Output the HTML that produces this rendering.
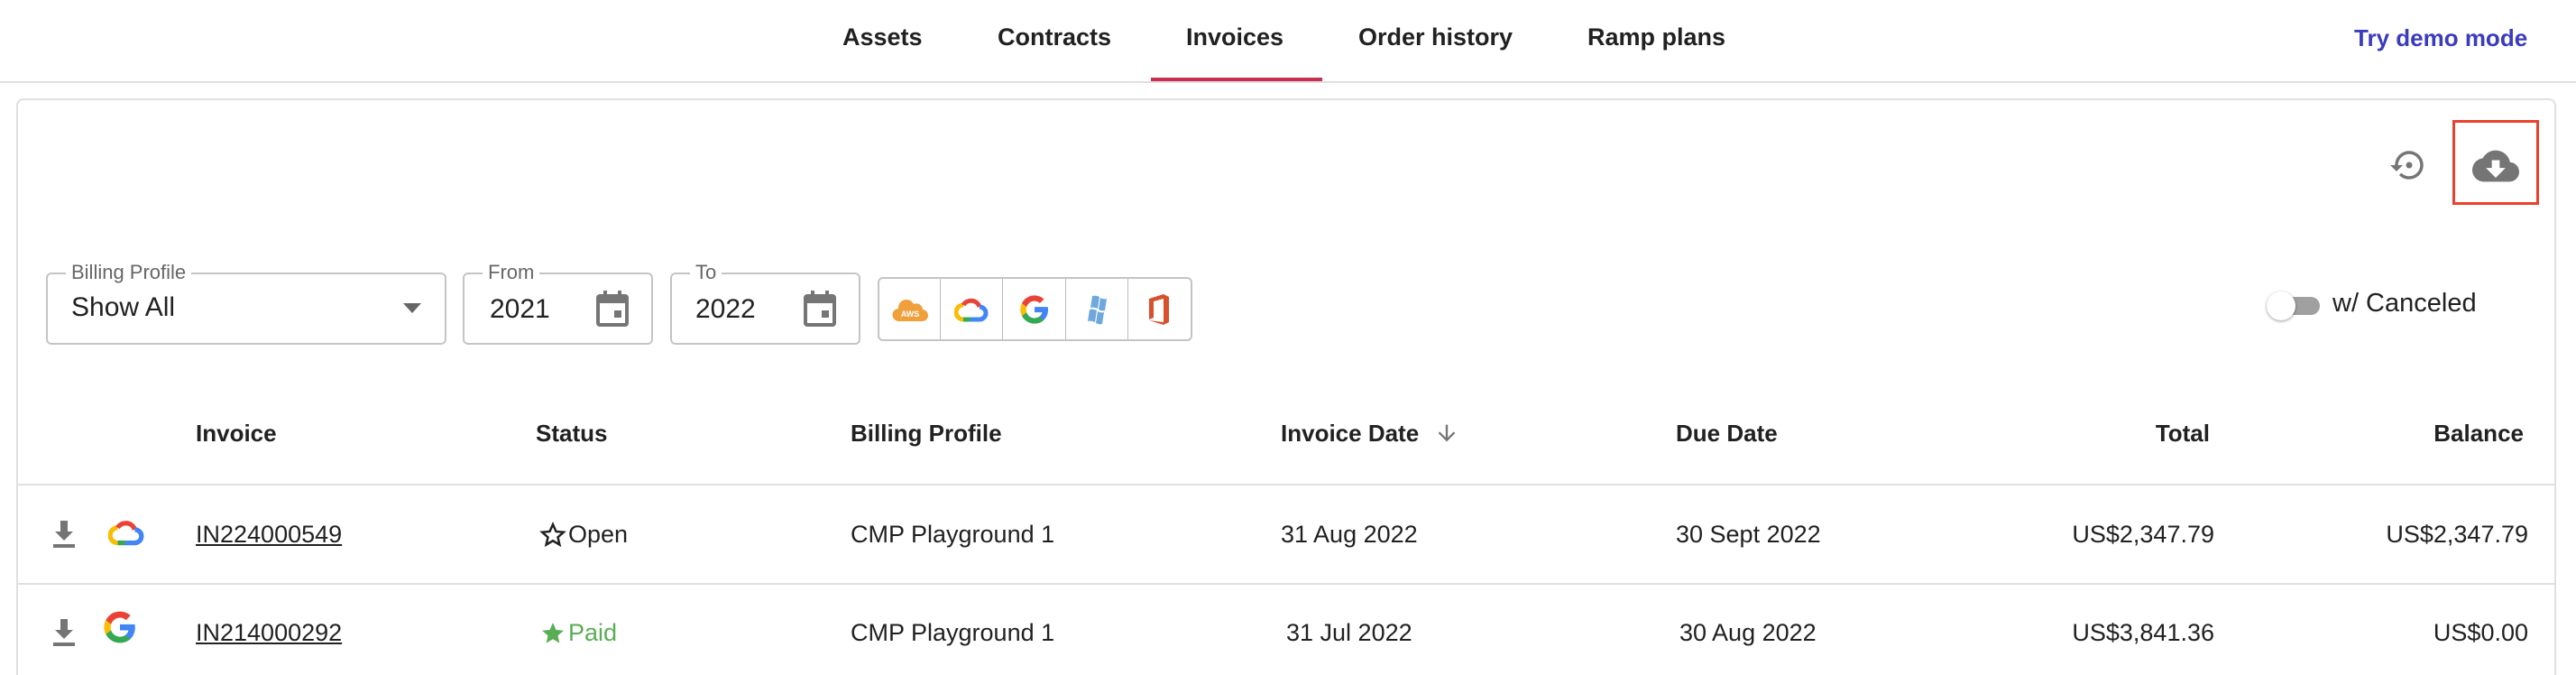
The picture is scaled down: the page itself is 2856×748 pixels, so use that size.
<!DOCTYPE html>
<html style="overflow:hidden;height:748px"><head><meta charset="utf-8"><style>
*{margin:0;padding:0;box-sizing:border-box}
body{width:2856px;height:748px;overflow:hidden;background:#fff;font-family:"Liberation Sans",Arial,sans-serif;color:#212121;position:relative}
#w{position:absolute;left:0;top:0;width:2856px;height:748px;overflow:hidden}
.a{position:absolute;white-space:nowrap}
.nav{font-size:27px;font-weight:bold;top:26px;color:#212121}
.hd{font-size:26px;font-weight:bold;top:465px}
.c{font-size:27px}
.r1{top:577px}.r2{top:686px}
.fld{position:absolute;border:2px solid #c4c4c4;border-radius:6px;height:80px;top:302px}
.lbl{position:absolute;top:-15px;left:20px;background:#fff;padding:0 6px;font-size:22px;color:#666}
.val{position:absolute;left:26px;top:20px;font-size:30px;color:#212121}
.rt{text-align:right}
</style></head><body><div id="w">
<div class="a nav" style="left:934px">Assets</div>
<div class="a nav" style="left:1106px">Contracts</div>
<div class="a nav" style="left:1315px">Invoices</div>
<div class="a nav" style="left:1506px">Order history</div>
<div class="a nav" style="left:1760px">Ramp plans</div>
<div class="a nav" style="left:2610px;color:#3b3bbd;font-size:26px;top:27px">Try demo mode</div>
<div class="a" style="left:1276px;top:86px;width:190px;height:4px;background:#c8304f"></div>
<div class="a" style="left:0;top:90px;width:2856px;height:2px;background:#e0e0e0"></div>

<div class="a" style="left:18px;top:109px;width:2816px;height:639px;border:2px solid #e0e0e0;border-bottom:none;border-radius:8px 8px 0 0"></div>

<svg class="a" style="left:2650px;top:162px" width="42" height="42" viewBox="0 0 24 24"><path fill="#757575" d="M13 3a9 9 0 0 0-9 9H1l3.89 3.89.07.14L9 12H6c0-3.87 3.13-7 7-7s7 3.13 7 7-3.13 7-7 7c-1.93 0-3.68-.79-4.94-2.06l-1.420 1.42A8.95 8.95 0 0 0 13 21a9 9 0 0 0 0-18zm0 7a2 2 0 1 0 0 4 2 2 0 0 0 0-4z" transform="translate(-1 0)"/></svg>
<div class="a" style="left:2719px;top:133px;width:96px;height:94px;border:3px solid #e8412c"></div>
<svg class="a" style="left:2741px;top:158px" width="52" height="52" viewBox="0 0 24 24"><path fill="#757575" d="M19.35 10.04A7.49 7.49 0 0 0 12 4C9.11 4 6.6 5.64 5.35 8.04A5.994 5.994 0 0 0 0 14c0 3.31 2.69 6 6 6h13c2.76 0 5-2.24 5-5 0-2.64-2.05-4.78-4.65-4.96zM17 13l-5 5-5-5h3V9h4v4h3z"/></svg>

<div class="fld" style="left:51px;width:444px"><span class="lbl">Billing Profile</span><span class="val">Show All</span>
<svg style="position:absolute;right:26px;top:32px" width="20" height="12"><path d="M0 0h20L10 11z" fill="#666"/></svg></div>
<div class="fld" style="left:513px;width:211px"><span class="lbl">From</span><span class="val" style="left:28px;top:22px">2021</span>
<svg style="position:absolute;left:144px;top:16px" width="40" height="44" viewBox="0 0 20 22"><path fill="#757575" d="M3 3h2V1h2v2h6V1h2v2h2a2 2 0 0 1 2 2v14a2 2 0 0 1-2 2H3a2 2 0 0 1-2-2V5a2 2 0 0 1 2-2zm0 5v11h14V8zm8 4h4v4h-4z"/></svg></div>
<div class="fld" style="left:743px;width:211px"><span class="lbl">To</span><span class="val" style="left:26px;top:22px">2022</span>
<svg style="position:absolute;left:144px;top:16px" width="40" height="44" viewBox="0 0 20 22"><path fill="#757575" d="M3 3h2V1h2v2h6V1h2v2h2a2 2 0 0 1 2 2v14a2 2 0 0 1-2 2H3a2 2 0 0 1-2-2V5a2 2 0 0 1 2-2zm0 5v11h14V8zm8 4h4v4h-4z"/></svg></div>

<div class="a" style="left:973px;top:307px;width:349px;height:71px;border:2px solid #c4c4c4;border-radius:6px;display:flex">
<div style="width:69px;border-right:1px solid #bbb;display:flex;align-items:center;justify-content:center"><svg width="40" height="30" viewBox="0 0 40 30"><path fill="#f0a03a" d="M8 28a7 7 0 0 1-1-14 9 9 0 0 1 17-5 7 7 0 0 1 10 6 6.5 6.5 0 0 1-1 13z"/><text x="20" y="23" font-size="9" fill="#fff" font-family="Liberation Sans" text-anchor="middle" font-weight="bold">AWS</text></svg></div>
<div style="width:70px;border-right:1px solid #bbb;display:flex;align-items:center;justify-content:center"><svg width="38" height="30" viewBox="0 0 38 30"><path d="M10 26a8 8 0 0 1 0-16" stroke="#fbbc04" stroke-width="5" fill="none"/><path d="M10 10a10 10 0 0 1 18 2" stroke="#ea4335" stroke-width="5" fill="none"/><path d="M28 12a7 7 0 0 1 0 14H18" stroke="#4285f4" stroke-width="5" fill="none"/><path d="M18 26h-8" stroke="#34a853" stroke-width="5"/></svg></div>
<div style="width:70px;border-right:1px solid #bbb;display:flex;align-items:center;justify-content:center"><svg width="34" height="34" viewBox="0 0 24 24"><path fill="#4285f4" d="M22.6 12.2c0-.8-.1-1.5-.2-2.2H12v4.2h5.9a5 5 0 0 1-2.2 3.3v2.7h3.6c2.1-1.9 3.3-4.8 3.3-8z"/><path fill="#34a853" d="M12 23c3 0 5.5-1 7.3-2.7l-3.6-2.7c-1 .7-2.2 1.1-3.7 1.1-2.9 0-5.3-1.9-6.2-4.5H2.1v2.8A11 11 0 0 0 12 23z"/><path fill="#fbbc04" d="M5.8 14.2a6.6 6.6 0 0 1 0-4.3V7.1H2.1a11 11 0 0 0 0 9.9z"/><path fill="#ea4335" d="M12 5.4c1.6 0 3.1.6 4.2 1.7l3.2-3.2A11 11 0 0 0 2.1 7.1l3.7 2.8C6.7 7.3 9.1 5.4 12 5.4z"/></svg></div>
<div style="width:70px;border-right:1px solid #bbb;display:flex;align-items:center;justify-content:center"><svg width="30" height="36" viewBox="0 0 30 36"><path fill="#6fa8dc" d="M10 3q4-1 8 1l-2 13q-4-2-8-1zM19 5q3 2 7 1l-2 13q-4 1-7-1zM7 18q4-1 8 1l-2 13q-4-2-8-1zM16 20q3 2 7 1l-2 13q-4 1-7-1z"/></svg></div>
<div style="width:70px;display:flex;align-items:center;justify-content:center"><svg width="26" height="36" viewBox="0 0 26 36"><path fill="#d9512c" d="M2 6l16-5 6 3v28l-6 3-16-5 16 2V6L7 9v18l-5 2z"/></svg></div>
</div>

<div class="a" style="left:2513px;top:329px;width:59px;height:20px;border-radius:10px;background:#a0a0a0"></div>
<div class="a" style="left:2513px;top:323px;width:32px;height:32px;border-radius:50%;background:#fff;box-shadow:0 1px 3px rgba(0,0,0,.4)"></div>
<div class="a" style="left:2586px;top:320px;font-size:29px">w/ Canceled</div>

<div class="a hd" style="left:217px">Invoice</div>
<div class="a hd" style="left:594px">Status</div>
<div class="a hd" style="left:943px">Billing Profile</div>
<div class="a hd" style="left:1420px">Invoice Date</div>
<svg class="a" style="left:1590px;top:466px" width="28" height="28" viewBox="0 0 24 24"><path fill="#757575" d="M20 12l-1.41-1.41L13 16.17V4h-2v12.17l-5.58-5.59L4 12l8 8z"/></svg>
<div class="a hd" style="left:1858px">Due Date</div>
<div class="a hd rt" style="right:406px">Total</div>
<div class="a hd rt" style="right:58px">Balance</div>
<div class="a" style="left:20px;top:536px;width:2814px;height:2px;background:#e0e0e0"></div>
<div class="a" style="left:20px;top:646px;width:2814px;height:2px;background:#e0e0e0"></div>

<svg class="a" style="left:57px;top:577px" width="28" height="30" viewBox="0 0 14 15"><path fill="#757575" d="M5 0h4v6h3l-5 5-5-5h3zM1 13h12v2H1z"/></svg>
<svg class="a" style="left:57px;top:686px" width="28" height="30" viewBox="0 0 14 15"><path fill="#757575" d="M5 0h4v6h3l-5 5-5-5h3zM1 13h12v2H1z"/></svg>
<svg class="a" style="left:120px;top:574px" width="40" height="32" viewBox="0 0 38 30"><path d="M10 26a8 8 0 0 1 0-16" stroke="#fbbc04" stroke-width="5" fill="none"/><path d="M10 10a10 10 0 0 1 18 2" stroke="#ea4335" stroke-width="5" fill="none"/><path d="M28 12a7 7 0 0 1 0 14H18" stroke="#4285f4" stroke-width="5" fill="none"/><path d="M18 26h-8" stroke="#34a853" stroke-width="5"/></svg>
<svg class="a" style="left:114px;top:676px" width="38" height="38" viewBox="0 0 24 24"><path fill="#4285f4" d="M22.6 12.2c0-.8-.1-1.5-.2-2.2H12v4.2h5.9a5 5 0 0 1-2.2 3.3v2.7h3.6c2.1-1.9 3.3-4.8 3.3-8z"/><path fill="#34a853" d="M12 23c3 0 5.5-1 7.3-2.7l-3.6-2.7c-1 .7-2.2 1.1-3.7 1.1-2.9 0-5.3-1.9-6.2-4.5H2.1v2.8A11 11 0 0 0 12 23z"/><path fill="#fbbc04" d="M5.8 14.2a6.6 6.6 0 0 1 0-4.3V7.1H2.1a11 11 0 0 0 0 9.9z"/><path fill="#ea4335" d="M12 5.4c1.6 0 3.1.6 4.2 1.7l3.2-3.2A11 11 0 0 0 2.1 7.1l3.7 2.8C6.7 7.3 9.1 5.4 12 5.4z"/></svg>

<div class="a c r1" style="left:217px;text-decoration:underline">IN224000549</div>
<div class="a c r2" style="left:217px;text-decoration:underline">IN214000292</div>
<svg class="a" style="left:598px;top:578px" width="30" height="30" viewBox="0 0 24 24"><path fill="none" stroke="#212121" stroke-width="2" d="M12 2.5l2.8 6.3 6.7.6-5.1 4.5 1.5 6.6L12 17l-5.9 3.5 1.5-6.6-5.1-4.5 6.7-.6z"/></svg>
<div class="a c r1" style="left:630px">Open</div>
<svg class="a" style="left:598px;top:687px" width="30" height="30" viewBox="0 0 24 24"><path fill="#5aad55" d="M12 2.5l2.8 6.3 6.7.6-5.1 4.5 1.5 6.6L12 17l-5.9 3.5 1.5-6.6-5.1-4.5 6.7-.6z"/></svg>
<div class="a c r2" style="left:630px;color:#5aad55">Paid</div>
<div class="a c r1" style="left:943px">CMP Playground 1</div>
<div class="a c r2" style="left:943px">CMP Playground 1</div>
<div class="a c r1" style="left:1420px">31 Aug 2022</div>
<div class="a c r2" style="left:1426px">31 Jul 2022</div>
<div class="a c r1" style="left:1858px">30 Sept 2022</div>
<div class="a c r2" style="left:1862px">30 Aug 2022</div>
<div class="a c r1 rt" style="right:401px">US$2,347.79</div>
<div class="a c r2 rt" style="right:401px">US$3,841.36</div>
<div class="a c r1 rt" style="right:53px">US$2,347.79</div>
<div class="a c r2 rt" style="right:53px">US$0.00</div>
</div></body></html>
